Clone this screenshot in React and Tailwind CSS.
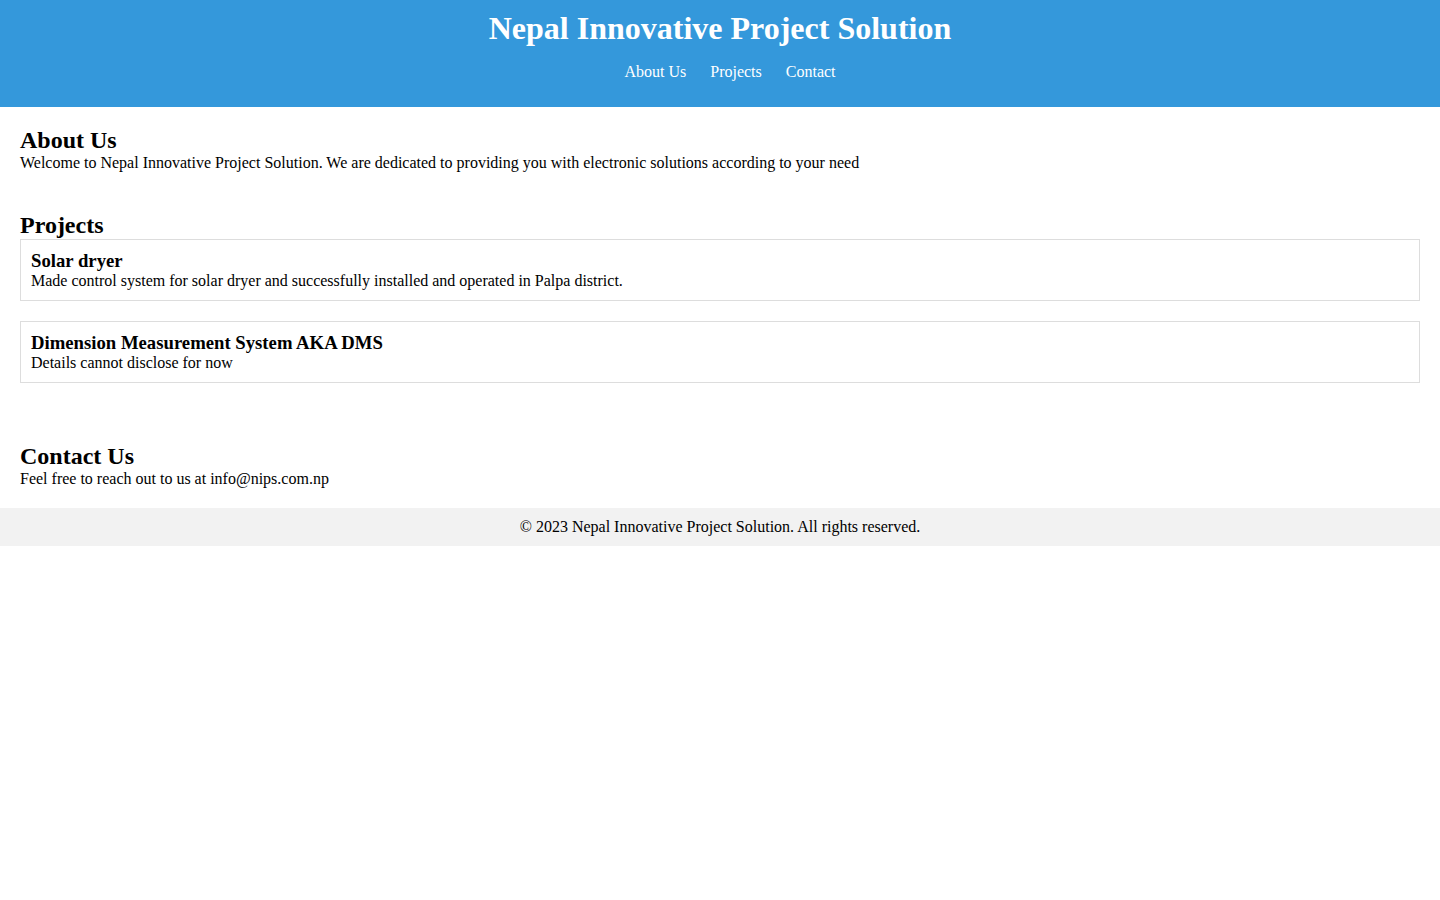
import React from 'react';

const projects = [
  {
    title: 'Solar dryer',
    text: 'Made control system for solar dryer and successfully installed and operated in Palpa district.',
  },
  {
    title: 'Dimension Measurement System AKA DMS',
    text: 'Details cannot disclose for now',
  },
];

const App = () => {
  return (
    <div className="min-h-[900px] bg-white text-black font-['Liberation_Serif',_'Times_New_Roman',_serif] text-base leading-[normal]">
      <header className="bg-[#3498db] text-white text-center py-[10px]">
        <h1 className="text-[32px] font-bold leading-[normal]">Nepal Innovative Project Solution</h1>
        <nav className="my-4 pl-5 flex justify-center gap-6">
          <a href="#about" className="text-white">About Us</a>
          <a href="#projects" className="text-white">Projects</a>
          <a href="#contact" className="text-white">Contact</a>
        </nav>
      </header>

      <section id="about" className="p-5">
        <h2 className="text-2xl font-bold leading-[normal]">About Us</h2>
        <p>Welcome to Nepal Innovative Project Solution. We are dedicated to providing you with electronic solutions according to your need</p>
      </section>

      <section id="projects" className="p-5">
        <h2 className="text-2xl font-bold leading-[normal]">Projects</h2>
        {projects.map((p) => (
          <div key={p.title} className="border border-[#dddddd] p-[10px] mb-5">
            <h3 className="text-[18.72px] font-bold leading-[normal]">{p.title}</h3>
            <p>{p.text}</p>
          </div>
        ))}
      </section>

      <section id="contact" className="p-5">
        <h2 className="text-2xl font-bold leading-[normal]">Contact Us</h2>
        <p>Feel free to reach out to us at info@nips.com.np</p>
      </section>

      <footer className="bg-[#f2f2f2] text-center py-[10px]">
        <p>© 2023 Nepal Innovative Project Solution. All rights reserved.</p>
      </footer>
    </div>
  );
};

export default App;
